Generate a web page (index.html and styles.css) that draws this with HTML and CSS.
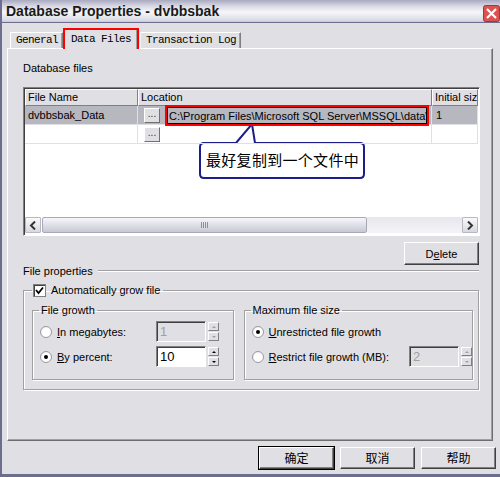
FILE: index.html
```html
<!DOCTYPE html>
<html lang="en">
<head>
  <meta charset="UTF-8" />
  <title>Database Properties - dvbbsbak</title>
  <link rel="stylesheet" href="styles.css">
</head>
<body>
<div class="window">
  <div class="titlebar">
    <span class="title">Database Properties - dvbbsbak</span>
    <span class="close">
      <svg width="17" height="17" viewBox="0 0 17 17">
        <rect x="0.5" y="0.5" width="16" height="16" rx="2" fill="#d9534f" stroke="#a8333a"/>
        <path d="M4 4 L13 13 M13 4 L4 13" stroke="#fff" stroke-width="2.2"/>
      </svg>
    </span>
  </div>

  <div class="tabs">
    <span class="tab">General</span>
    <span class="tab active">Data Files</span>
    <span class="tab">Transaction Log</span>
  </div>

  <div class="panel">
    <div class="label">Database files</div>

    <div class="grid">
      <div class="grid-head">
        <span>File Name</span>
        <span>Location</span>
        <span>Initial size</span>
      </div>
      <div class="grid-row selected">
        <span class="name">dvbbsbak_Data</span>
        <span class="loc">
          <span class="dots">...</span>
          <span class="field">C:\Program Files\Microsoft SQL Server\MSSQL\data\dvbbsbak_Data.MDF</span>
        </span>
        <span class="size">1</span>
      </div>
      <div class="grid-row">
        <span class="name"></span>
        <span class="loc"><span class="dots">...</span></span>
        <span class="size"></span>
      </div>
      <div class="grid-fill"></div>
      <div class="hscroll">
        <span class="arrow">
          <svg width="8" height="9" viewBox="0 0 8 9"><path d="M6 0.5 L2 4.5 L6 8.5" fill="none" stroke="#333" stroke-width="2"/></svg>
        </span>
        <span class="thumb"><span class="grip"></span></span>
        <span class="track"></span>
        <span class="arrow">
          <svg width="8" height="9" viewBox="0 0 8 9"><path d="M2 0.5 L6 4.5 L2 8.5" fill="none" stroke="#333" stroke-width="2"/></svg>
        </span>
      </div>
    </div>

    <div class="delete-row">
      <button class="btn">D<u>e</u>lete</button>
    </div>

    <div class="section-title"><span>File properties</span></div>

    <fieldset class="group outer">
      <legend><span class="check">
        <svg width="9" height="9" viewBox="0 0 9 9"><path d="M1 4 L3.5 7 L8 1.5" fill="none" stroke="#000" stroke-width="1.8"/></svg>
      </span>Automatically grow file</legend>

      <div class="groups">
        <fieldset class="group">
          <legend>File growth</legend>
          <div class="opt">
            <span class="radio"></span>
            <span class="opt-label"><u>I</u>n megabytes:</span>
            <span class="spin disabled"><span class="spin-box">1</span><span class="spin-btns"><i class="up"></i><i class="down"></i></span></span>
          </div>
          <div class="opt">
            <span class="radio on"></span>
            <span class="opt-label"><u>B</u>y percent:</span>
            <span class="spin"><span class="spin-box">10</span><span class="spin-btns"><i class="up"></i><i class="down"></i></span></span>
          </div>
        </fieldset>

        <fieldset class="group">
          <legend>Maximum file size</legend>
          <div class="opt">
            <span class="radio on"></span>
            <span class="opt-label wide"><u>U</u>nrestricted file growth</span>
          </div>
          <div class="opt">
            <span class="radio"></span>
            <span class="opt-label wide"><u>R</u>estrict file growth (MB):</span>
            <span class="spin disabled"><span class="spin-box">2</span><span class="spin-btns"><i class="up"></i><i class="down"></i></span></span>
          </div>
        </fieldset>
      </div>
    </fieldset>
  </div>

  <div class="actions">
    <button class="btn cn default">确定</button>
    <button class="btn cn">取消</button>
    <button class="btn cn">帮助</button>
  </div>

  <div class="callout">
    <svg width="175" height="62" viewBox="0 0 175 62">
      <path d="M9 23 H41 L57 4 L60 23 H165 Q169 23 169 27 V54 Q169 58 165 58 H9 Q5 58 5 54 V27 Q5 23 9 23 Z" fill="#fff" stroke="#1c1c8a" stroke-width="2"/>
    </svg>
    <span class="callout-text">最好复制到一个文件中</span>
  </div>
</div>
</body>
</html>
```

FILE: styles.css
```css
body {
  margin: 0;
  width: 500px;
  height: 477px;
  overflow: hidden;
  font-family: "Liberation Sans", Arial, sans-serif;
  font-size: 11px;
  color: #000;
  background-color: #e0dfe3;
}
.window {
  position: relative;
  height: 474px;
  border-left: 2px solid #6d6d8f;
  border-bottom: 3px solid #6d6d8f;
  background-color: #e0dfe3;
}
.titlebar {
  height: 22px;
  border-bottom: 1px solid #6d6d90;
  background: linear-gradient(#a9a9c0 0px, #d8d8e4 6px, #f6f6fa 12px, #dcdce6 20px, #c8c8d6 22px);
  display: flex;
  align-items: center;
  justify-content: space-between;
  padding-left: 4px;
}
.title {
  font-weight: bold;
  font-size: 14px;
  color: #1a1a1a;
}
.close {
  display: flex;
  margin-top: 4px;
}
.tabs {
  display: flex;
  align-items: flex-end;
  height: 25px;
  padding-left: 8px;
}
.tab {
  font-family: "Liberation Mono", monospace;
  font-size: 11px;
  letter-spacing: -0.6px;
  height: 15px;
  line-height: 15px;
  padding: 0 4px 0 5px;
  border: 1px solid #fff;
  border-right-color: #808080;
  border-bottom: none;
  box-shadow: inset -1px 0 #a0a0a0;
}
.tab.active {
  height: 18px;
  line-height: 18px;
  border: 2px solid #f00;
  border-bottom: none;
  padding: 0 6px 1px 6px;
  margin: 0 1px -1px 0;
  background-color: #e0dfe3;
  position: relative;
}
.panel {
  margin-left: 5px;
  width: 486px;
  height: 393px;
  border: 1px solid #fff;
  border-right-color: #6e6e6e;
  border-bottom-color: #6e6e6e;
  box-shadow: inset -1px -1px #a0a0a0;
  padding: 0 12px 0 15px;
  box-sizing: border-box;
}
.label {
  margin-top: 13px;
  line-height: 13px;
}
.grid {
  margin-top: 12px;
  height: 149px;
  border: 1px solid #808080;
  border-right-color: #fff;
  border-bottom-color: #fff;
  box-shadow: inset 1px 1px #404040;
  background-color: #fff;
  display: flex;
  flex-direction: column;
  box-sizing: border-box;
  padding: 1px;
}
.grid-head,
.grid-row {
  display: grid;
  grid-template-columns: 113px 294px 1fr;
}
.grid-head span {
  height: 15px;
  line-height: 15px;
  padding-left: 2px;
  background-color: #e0dfe3;
  border-top: 1px solid #fff;
  border-left: 1px solid #fff;
  border-right: 1px solid #808080;
  border-bottom: 1px solid #808080;
  white-space: nowrap;
  overflow: hidden;
}
.grid-row {
  height: 19px;
}
.grid-row > span {
  border-right: 1px solid #e0dfe3;
  border-bottom: 1px solid #e0dfe3;
  display: flex;
  align-items: center;
  white-space: nowrap;
}
.grid-row.selected {
  background-color: #b7b7c0;
}
.name {
  padding-left: 3px;
}
.size {
  padding-left: 4px;
  overflow: hidden;
}
.loc {
  gap: 7px;
  padding-left: 6px;
  position: relative;
  z-index: 1;
}
.dots {
  width: 14px;
  height: 13px;
  line-height: 10px;
  text-align: center;
  font-size: 10px;
  border: 1px solid #fff;
  border-right-color: #707070;
  border-bottom-color: #707070;
  background-color: #e0dfe3;
  color: #333;
}
.field {
  width: 260px;
  height: 17px;
  line-height: 17px;
  box-sizing: border-box;
  border: 1px solid #000;
  outline: 2px solid #f00;
  padding-left: 1px;
  background-color: #b7b7c0;
  overflow: hidden;
  white-space: nowrap;
}
.grid-fill {
  flex: 1;
}
.hscroll {
  display: flex;
  height: 16px;
  margin-bottom: 1px;
}
.arrow {
  width: 14px;
  height: 14px;
  border: 1px solid #b8b8c4;
  border-radius: 1px;
  background: linear-gradient(#fafafc, #d8d8e2);
  display: flex;
  align-items: center;
  justify-content: center;
}
.thumb {
  width: 325px;
  margin-left: 1px;
  border: 1px solid #a8a8b8;
  border-radius: 2px;
  background: linear-gradient(#f6f6fa, #c8c8d4);
  display: flex;
  align-items: center;
  justify-content: center;
  box-sizing: border-box;
}
.grip {
  width: 7px;
  height: 6px;
  background: repeating-linear-gradient(90deg, #8e8ea0 0 1px, transparent 1px 2px);
}
.track {
  flex: 1;
  background: linear-gradient(#e6e6ec, #f4f4f8);
}
.delete-row {
  display: flex;
  justify-content: flex-end;
  margin-top: 6px;
  padding-right: 1px;
}
.btn {
  width: 75px;
  height: 23px;
  font-family: "Liberation Sans", Arial, sans-serif;
  font-size: 11px;
  background-color: #e0dfe3;
  border: 1px solid #fff;
  border-right-color: #404040;
  border-bottom-color: #404040;
  box-shadow: inset -1px -1px #808080;
  padding: 0;
  color: #000;
}
.section-title {
  display: flex;
  align-items: center;
  gap: 5px;
  line-height: 12px;
}
.section-title::after {
  content: "";
  flex: 1;
  border-top: 1px solid #a0a0a0;
  border-bottom: 1px solid #fff;
  margin-right: 1px;
}
.group {
  margin: 0;
  padding: 0;
  border: 1px solid #a0a0a0;
  box-shadow: 1px 1px #fff, inset 1px 1px #fff;
  min-width: 0;
}
.group legend {
  padding: 0 2px;
  margin-left: 6px;
  line-height: 12px;
  display: flex;
  align-items: center;
}
.group.outer {
  margin-top: 6px;
  height: 107px;
  box-sizing: border-box;
  margin-right: 1px;
}
.group.outer > legend {
  margin-left: 8px;
  line-height: 14px;
  gap: 5px;
  padding: 0 3px 0 1px;
}
.check {
  width: 11px;
  height: 11px;
  background-color: #fff;
  border: 1px solid #808080;
  box-shadow: inset 1px 1px #404040;
  display: flex;
  align-items: center;
  justify-content: center;
}
.groups {
  display: flex;
  gap: 10px;
  padding: 7px 5px 0 8px;
}
.groups .group {
  height: 76px;
  box-sizing: border-box;
}
.groups .group:first-child {
  width: 202px;
}
.groups .group:last-child {
  width: 230px;
}
.opt {
  display: flex;
  align-items: center;
  height: 23px;
  padding-left: 7px;
}
.opt:first-of-type {
  margin-top: 4px;
}
.opt + .opt {
  margin-top: 2px;
}
.radio {
  flex: none;
  width: 12px;
  height: 12px;
  border-radius: 50%;
  box-sizing: border-box;
  border: 1px solid #9a9aa0;
  background: radial-gradient(circle at 60% 60%, #fff 55%, #d8d8dc);
  display: flex;
  align-items: center;
  justify-content: center;
}
.radio.on::after {
  content: "";
  width: 4px;
  height: 4px;
  border-radius: 50%;
  background-color: #000;
}
.opt-label {
  margin-left: 5px;
  width: 99px;
  white-space: nowrap;
}
.opt-label.wide {
  width: 141px;
}
.spin {
  display: flex;
  align-items: center;
  gap: 2px;
}
.spin-box {
  width: 50px;
  height: 21px;
  box-sizing: border-box;
  border: 1px solid #808080;
  border-right-color: #fff;
  border-bottom-color: #fff;
  box-shadow: inset 1px 1px #404040;
  background-color: #fff;
  font-size: 13px;
  line-height: 19px;
  padding-left: 3px;
}
.spin.disabled .spin-box {
  background-color: #e0dfe3;
  color: #a0a0a0;
}
.spin-btns {
  display: flex;
  flex-direction: column;
  gap: 1px;
}
.spin-btns i {
  width: 11px;
  height: 9px;
  box-sizing: border-box;
  border: 1px solid #fff;
  border-right-color: #808080;
  border-bottom-color: #808080;
  background-color: #e0dfe3;
  display: flex;
  align-items: center;
  justify-content: center;
}
.spin-btns i::after {
  content: "";
  border-left: 2px solid transparent;
  border-right: 2px solid transparent;
}
.spin-btns .up::after {
  border-bottom: 2px solid #000;
}
.spin-btns .down::after {
  border-top: 2px solid #000;
}
.spin.disabled .spin-btns .up::after {
  border-bottom-color: #a0a0a0;
}
.spin.disabled .spin-btns .down::after {
  border-top-color: #a0a0a0;
}
.actions {
  display: flex;
  justify-content: flex-end;
  gap: 6px;
  padding-right: 4px;
  margin-top: 6px;
}
.btn.cn {
  font-family: "Noto Sans CJK SC", sans-serif;
  font-size: 12px;
  height: 22px;
  line-height: 18px;
}
.btn.default {
  outline: 1px solid #000;
}
.callout {
  position: absolute;
  left: 193px;
  top: 120px;
  width: 175px;
  height: 62px;
}
.callout svg {
  display: block;
}
.callout-text {
  position: absolute;
  left: 11px;
  top: 30px;
  font-family: "Noto Sans CJK SC", sans-serif;
  font-size: 15px;
  line-height: 20px;
  letter-spacing: 0.3px;
}
```
